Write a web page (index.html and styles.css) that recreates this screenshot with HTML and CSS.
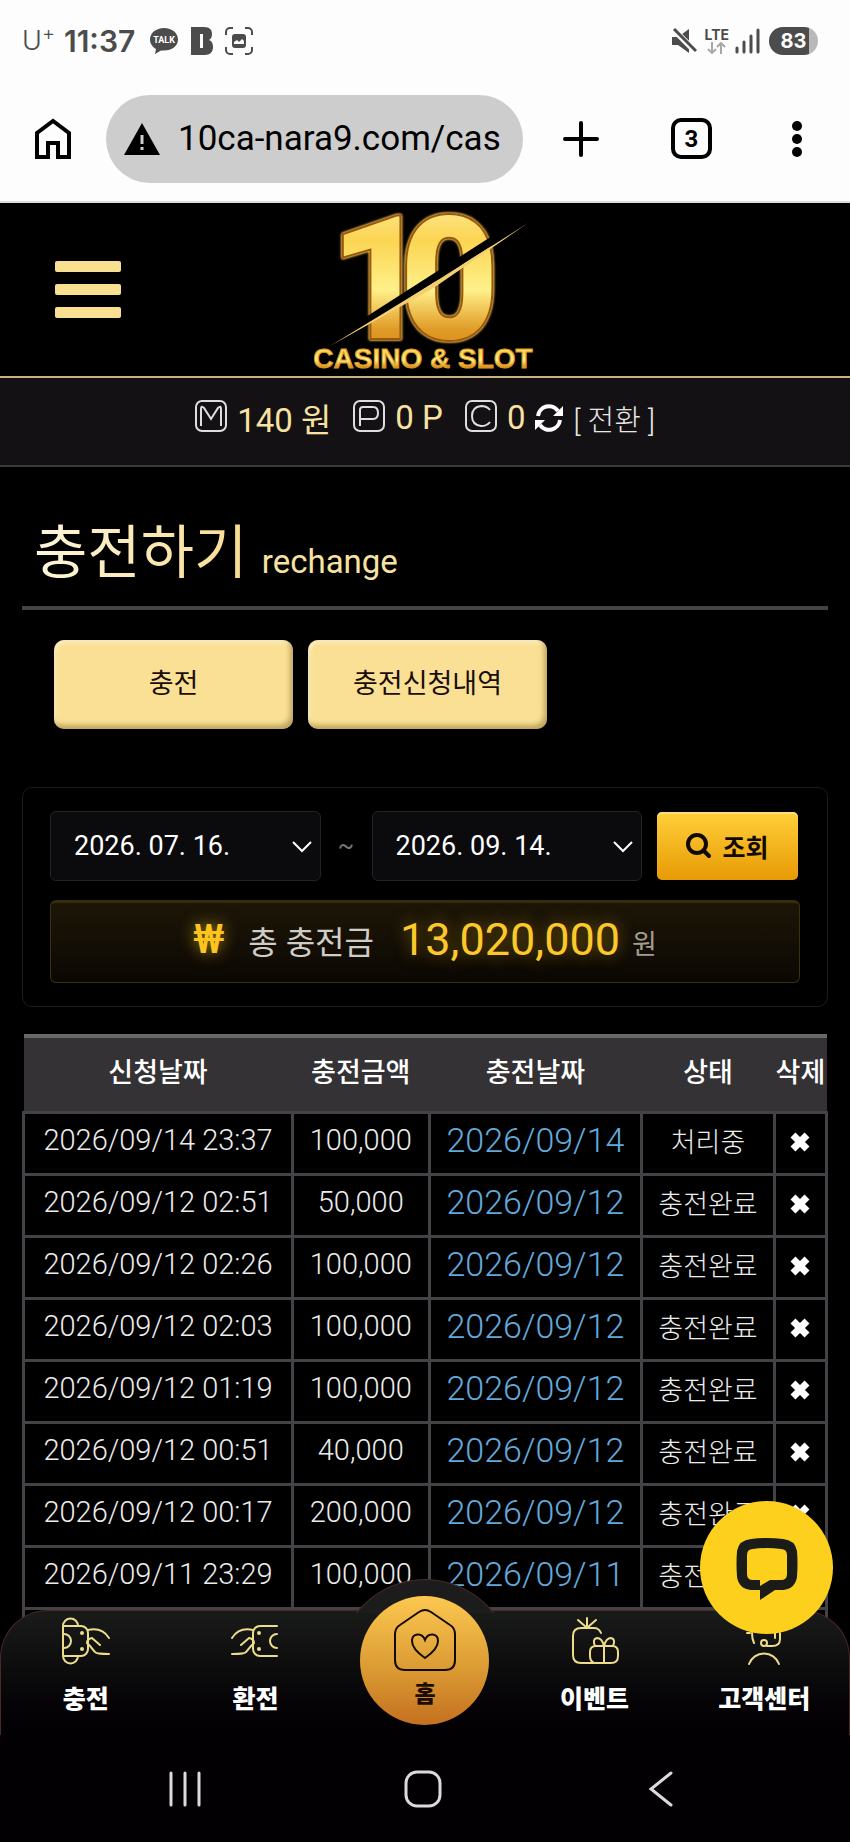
FILE: index.html
```
<!DOCTYPE html>
<html lang="ko">
<head>
    <meta charset="UTF-8">
    <meta name="viewport" content="width=device-width, initial-scale=1.0">
    <title>충전하기</title>
    <link rel="stylesheet" href="styles.css">
</head>
<body>
<div class="screen">

    <!-- status bar -->
    <div class="status-bar">
        <span class="carrier">U<sup>+</sup></span>
        <span class="clock">11:37</span>
        <svg class="st-icon" width="30" height="28" viewBox="0 0 30 28">
            <path d="M15 1C7 1 1 6 1 12.500c0 4 2.500 7.500 6 9.500l-1 5 6-3.500h3c8 0 14-4.500 14-11S23 1 15 1z" fill="#4c4c4c"/>
            <text x="15" y="16" text-anchor="middle" class="talk">TALK</text>
        </svg>
        <svg class="st-icon" width="22" height="28" viewBox="0 0 22 28">
            <path fill="#4c4c4c" fill-rule="evenodd" d="M0 0h13c6 0 8 3 8 7 0 3-1 5-3 6 3 1 4 4 4 7 0 5-3 8-8 8H0zM9 7v14h3V7z"/>
        </svg>
        <svg class="st-icon" width="28" height="28" viewBox="0 0 28 28" fill="none" stroke="#4c4c4c" stroke-width="2">
            <path d="M1 8V5a4 4 0 0 1 4-4h3M20 1h3a4 4 0 0 1 4 4v3M27 20v3a4 4 0 0 1-4 4h-3M8 27H5a4 4 0 0 1-4-4v-3"/>
            <rect x="8" y="8" width="12" height="12" rx="2" fill="#4c4c4c"/>
            <path d="M9 17v-2l3-2 2 2 3-3 2 2v3z" fill="#fdfdfd" stroke="none"/>
        </svg>
        <span class="spacer"></span>
        <svg width="26" height="26" viewBox="0 0 26 26">
            <path d="M1 9h6L18 1v24l-11-8H1z" fill="#4c4c4c"/>
            <path d="M1 0l25 25" stroke="#fdfdfd" stroke-width="6"/>
            <path d="M3 1l22 22" stroke="#4c4c4c" stroke-width="3"/>
        </svg>
        <span class="lte">LTE
            <svg width="20" height="12" viewBox="0 0 20 12" fill="none" stroke="#a8a8a8" stroke-width="2"><path d="M5 0v11M1 7l4 4 4-4M14 12V1M10 5l4-4 4 4"/></svg>
        </span>
        <svg class="signal" width="26" height="26" viewBox="0 0 26 26" stroke="#4c4c4c" stroke-width="3" stroke-linecap="round"><path d="M3 24v-4M10 24V14M17 24V8M24 24V2"/></svg>
        <span class="battery">83</span>
    </div>

    <!-- browser toolbar -->
    <div class="toolbar">
        <button class="tool home-btn" aria-label="홈">
            <svg width="38" height="42" viewBox="0 0 38 42" fill="none" stroke="#000" stroke-width="4"><path d="M3 39V15L19 3l16 12v24H24V25H14v14z"/></svg>
        </button>
        <div class="url-box">
            <svg width="36" height="32" viewBox="0 0 36 32"><path d="M18 0l18 32H0z"/><path d="M18 12v9M18 24v3" stroke="#cdcdcd" stroke-width="3"/></svg>
            <input type="text" class="url" aria-label="주소" value="10ca-nara9.com/cas">
        </div>
        <button class="tool" aria-label="새 탭">
            <svg width="36" height="36" viewBox="0 0 36 36" stroke="#000" stroke-width="4" stroke-linecap="round"><path d="M18 2v32M2 18h32"/></svg>
        </button>
        <button class="tool tabs">3</button>
        <button class="tool more" aria-label="메뉴">
            <svg width="10" height="36" viewBox="0 0 10 36"><circle cx="5" cy="5" r="5"/><circle cx="5" cy="18" r="5"/><circle cx="5" cy="31" r="5"/></svg>
        </button>
    </div>

    <div class="page">
        <header class="header">
            <button class="menu-btn" aria-label="메뉴 열기"><span></span><span></span><span></span></button>
            <svg class="logo" width="230" height="166" viewBox="0 0 230 166" role="img" aria-label="10 CASINO &amp; SLOT">
                <defs>
                    <linearGradient id="gold" x1="0" y1="0" x2="0" y2="1">
                        <stop offset="0" stop-color="#fff3b8"/>
                        <stop offset=".3" stop-color="#fbd552"/>
                        <stop offset=".55" stop-color="#fff08a"/>
                        <stop offset=".75" stop-color="#e09a25"/>
                        <stop offset="1" stop-color="#c97a12"/>
                    </linearGradient>
                </defs>
                <g class="logo-num">
                    <text x="20" y="131">1</text>
                    <text x="90" y="131">0</text>
                </g>
                <path d="M20 133L218 6v10L20 141z" fill="#000"/>
                <path d="M20 139L120 78 218 16 122 82z" fill="#f3cf72"/>
                <text x="113" y="161" text-anchor="middle" class="logo-sub">CASINO &amp; SLOT</text>
            </svg>
        </header>

        <div class="wallet">
            <svg class="badge" viewBox="0 0 32 32"><rect x="1" y="1" width="30" height="30" rx="6"/><path d="M6 26V9q0-4 3-1l7 11 7-11q3-3 3 1v17"/></svg>
            <span class="amount">140 원</span>
            <svg class="badge second" viewBox="0 0 32 32"><rect x="1" y="1" width="30" height="30" rx="6"/><path d="M7 26V10q0-3 3-3h10q5 0 5 6t-5 6H7"/></svg>
            <span class="amount">0 P</span>
            <svg class="badge third" viewBox="0 0 32 32"><rect x="1" y="1" width="30" height="30" rx="6"/><path d="M25 10q-3-4-9-4-9 1-9 10t9 10q6 0 9-4"/></svg>
            <span class="amount">0</span>
            <button class="exchange">
                <svg width="28" height="28" viewBox="0 0 28 28" fill="none" stroke="#fff" stroke-width="4"><path d="M3 12A11 11 0 0 1 23 7M25 16A11 11 0 0 1 5 21"/><path d="M28 2v10H18zM0 26V16h10z" fill="#fff" stroke="none"/></svg>
                [ 전환 ]
            </button>
        </div>

        <main class="content">
            <h2 class="title"><span>충전하기</span> <small>rechange</small></h2>

            <div class="tabs-row">
                <button class="gold-btn">충전</button>
                <button class="gold-btn">충전신청내역</button>
            </div>

            <section class="panel">
                <div class="search">
                    <div class="date">
                        <select aria-label="시작 날짜"><option>2026. 07. 16.</option></select>
                        <svg viewBox="0 0 20 12"><path d="M1 1l9 9 9-9"/></svg>
                    </div>
                    <span class="tilde">~</span>
                    <div class="date">
                        <select aria-label="종료 날짜"><option>2026. 09. 14.</option></select>
                        <svg viewBox="0 0 20 12"><path d="M1 1l9 9 9-9"/></svg>
                    </div>
                    <button class="search-btn">
                        <svg width="26" height="26" viewBox="0 0 26 26" fill="none" stroke="#120a00" stroke-width="4" stroke-linecap="round"><circle cx="11" cy="11" r="9"/><path d="M18 18l5 5"/></svg>
                        조회
                    </button>
                </div>
                <div class="total">
                    <span class="won">₩</span>
                    <span class="total-label">총 충전금</span>
                    <span class="total-num">13,020,000</span>
                    <span class="unit">원</span>
                </div>
            </section>

            <table class="list">
                <colgroup><col class="c1"><col class="c2"><col class="c3"><col class="c4"><col class="c5"></colgroup>
                <thead>
                    <tr><th>신청날짜</th><th>충전금액</th><th>충전날짜</th><th>상태</th><th>삭제</th></tr>
                </thead>
                <tbody id="rows"></tbody>
            </table>
        </main>

        <button class="chat" aria-label="채팅 상담">
            <svg width="64" height="64" viewBox="0 0 64 64"><path fill="#1b1b18" fill-rule="evenodd" d="M16 3Q32 1 48 3Q60 4 62 15Q63 27 62 41Q60 53 48 54H40L25 64V54H16Q4 53 2 41Q1 27 2 15Q4 4 16 3zM18 13Q12 13 12 19V38Q12 44 18 44H25V50L35 44H46Q52 44 52 38V19Q52 13 46 13Q32 11 18 13z"/></svg>
        </button>

        <nav class="bottom-nav">
            <div class="bump"></div>
            <a href="#" class="item">
                <svg viewBox="0 0 48 48">
                    <path d="M1 9v30a7 7 0 0 0 15 0M1 9a7 7 0 0 1 15 0"/>
                    <g id="hand"><path d="M2 9h17a7 7 0 0 1 7 7v16a7 7 0 0 1-7 7H2M2 17a6 6 0 0 1 0 14M26 13q14-3 21 8M38 28l-8-7q-5 1-5 5l3 3 5 6q1 2 14 2"/><circle cx="20" cy="16" r="1"/><circle cx="20" cy="32" r="1"/></g>
                </svg>
                <span>충전</span>
            </a>
            <a href="#" class="item">
                <svg viewBox="0 0 48 48"><g transform="matrix(-1 0 0 1 48 0)"><use href="#hand"/></g></svg>
                <span>환전</span>
            </a>
            <a href="#" class="item home">
                <svg viewBox="0 0 64 64"><path d="M26 4q6-4 12 0l19 13q5 3 5 9v26q0 10-10 10H12Q2 62 2 52V26q0-6 5-9zM32 50q-13-9-13-17c0-8 10-9 13-1 3-8 13-7 13 1q0 8-13 17z"/></svg>
                <span>홈</span>
            </a>
            <a href="#" class="item">
                <svg viewBox="0 0 48 48"><path d="M30 16q-2-5-7-5H10q-8 0-8 8v19q0 8 8 8h30q7 0 7-7v-4q0-6-6-6H25q-6 0-6 6v4q0 5 4 7M33 29v17M16 1v10M7 3l8 7M25 3l-8 7M24 29q-3-7 2-8 5 0 7 8 2-8 7-8 5 1 2 8"/></svg>
                <span>이벤트</span>
            </a>
            <a href="#" class="item">
                <svg viewBox="0 0 48 48"><path d="M9 47a16 16 0 0 1 30 0M14 26q-2-4-2-10M7 16h3M35 16v5M40 16v6q0 7-8 7h-5"/><circle cx="24" cy="26" r="3"/></svg>
                <span>고객센터</span>
            </a>
        </nav>
    </div>

    <!-- system navigation -->
    <div class="system-nav">
        <button aria-label="최근 앱"><svg width="36" height="36" viewBox="0 0 36 36"><path d="M4 2v32M18 2v32M32 2v32"/></svg></button>
        <button aria-label="홈 화면"><svg width="38" height="38" viewBox="0 0 38 38"><rect x="2" y="2" width="34" height="34" rx="11"/></svg></button>
        <button aria-label="뒤로"><svg width="36" height="38" viewBox="0 0 36 38"><path d="M28 3L8 19l20 16"/></svg></button>
    </div>
</div>

<script>
    const rows = [
        ["2026/09/14 23:37", "100,000", "2026/09/14", "처리중"],
        ["2026/09/12 02:51", "50,000", "2026/09/12", "충전완료"],
        ["2026/09/12 02:26", "100,000", "2026/09/12", "충전완료"],
        ["2026/09/12 02:03", "100,000", "2026/09/12", "충전완료"],
        ["2026/09/12 01:19", "100,000", "2026/09/12", "충전완료"],
        ["2026/09/12 00:51", "40,000", "2026/09/12", "충전완료"],
        ["2026/09/12 00:17", "200,000", "2026/09/12", "충전완료"],
        ["2026/09/11 23:29", "100,000", "2026/09/11", "충전완료"]
    ];
    const del = '<button class="del" aria-label="삭제"><svg width="20" height="20" viewBox="0 0 20 20"><path d="M3 3l14 14M17 3L3 17"/></svg></button>';
    document.getElementById("rows").innerHTML = rows.map(r =>
        `<tr><td>${r[0]}</td><td>${r[1]}</td><td class="done">${r[2]}</td><td class="state">${r[3]}</td><td>${del}</td></tr>`
    ).join("") + "<tr><td></td><td></td><td></td><td></td><td></td></tr>";
</script>
</body>
</html>
```

FILE: styles.css
```
* {
    box-sizing: border-box;
}
body {
    margin: 0;
    background: #000;
    color: #fff;
    font-family: Roboto, "Noto Sans CJK KR", sans-serif;
}
button {
    padding: 0;
    border: none;
    background: none;
    color: inherit;
    font-family: inherit;
    cursor: pointer;
}
svg {
    display: block;
    flex: none;
}
.screen {
    display: flex;
    flex-direction: column;
    height: 100vh;
    overflow: hidden;
}

/* status bar */
.status-bar {
    display: flex;
    align-items: center;
    height: 82px;
    padding: 0 32px 0 22px;
    background: #fdfdfd;
    color: #4c4c4c;
    font-family: Inter, sans-serif;
}
.carrier {
    width: 42px;
    font-size: 27px;
    font-weight: 300;
    line-height: 30px;
}
.carrier sup {
    font-size: 20px;
    line-height: 10px;
}
.clock {
    margin-right: 14px;
    font-size: 30px;
    font-weight: 600;
}
.st-icon {
    margin-right: 12px;
}
.talk {
    font: 700 9px Roboto, sans-serif;
    fill: #fff;
}
.spacer {
    flex: 1;
}
.lte {
    display: flex;
    flex-direction: column;
    align-items: center;
    margin: 0 5px 0 8px;
    font-size: 14px;
    font-weight: 700;
    line-height: 14px;
}
.battery {
    width: 49px;
    height: 28px;
    margin-left: 9px;
    border-radius: 14px;
    background: linear-gradient(90deg, #4c4c4c 82%, #b9b9b9 82%);
    color: #fff;
    font-size: 20px;
    font-weight: 700;
    line-height: 28px;
    text-align: center;
}

/* browser toolbar */
.toolbar {
    display: flex;
    align-items: center;
    height: 121px;
    padding: 12px 48px 18px 34px;
    border-bottom: 2px solid #dcdcdc;
    background: #fdfdfd;
    color: #000;
}
.url-box {
    display: flex;
    flex: 1;
    align-items: center;
    gap: 18px;
    height: 88px;
    margin: 0 40px 0 34px;
    padding: 0 14px 0 18px;
    border-radius: 44px;
    background: #cdcdcd;
}
.url {
    width: 100%;
    min-width: 0;
    padding: 0;
    border: none;
    background: none;
    font: 400 35px Roboto, sans-serif;
    outline: none;
}
.tabs {
    width: 41px;
    height: 41px;
    margin: 0 80px 0 72px;
    border: 4px solid #000;
    border-radius: 10px;
    font-size: 24px;
    font-weight: 700;
}

/* site header */
.page {
    position: relative;
    flex: 1;
    min-height: 0;
    overflow: hidden;
}
.header {
    display: grid;
    grid-template-columns: 1fr auto 1fr;
    align-items: center;
    height: 175px;
    padding: 0 55px;
    border-bottom: 2px solid #c9b184;
}
.menu-btn {
    display: flex;
    flex-direction: column;
    gap: 12px;
    width: 66px;
}
.menu-btn span {
    height: 11px;
    border-radius: 2px;
    background: #f8df92;
}
.logo {
    overflow: visible;
}
.logo-num {
    font: 900 170px Roboto, sans-serif;
    fill: url(#gold);
    stroke: #9a5808;
    stroke-width: 4px;
    paint-order: stroke;
    filter: drop-shadow(0 0 1px #ffe08a) drop-shadow(0 0 1px #d99a2e);
}
.logo-sub {
    font: 700 28px "Liberation Sans", sans-serif;
    fill: url(#gold);
    stroke: #d9951f;
    stroke-width: 1px;
}
.wallet {
    display: flex;
    align-items: center;
    justify-content: center;
    height: 89px;
    padding-bottom: 8px;
    border-bottom: 2px solid #3b393c;
    background: #141114;
    font-size: 33px;
}
.badge {
    width: 32px;
    height: 32px;
    margin: 0 10px 4px 0;
    fill: none;
    stroke: #dedede;
    stroke-width: 2;
}
.badge.second,
.badge.third {
    margin-left: 22px;
}
.amount {
    color: #f7e2a0;
}
.exchange {
    display: flex;
    align-items: center;
    gap: 10px;
    margin-left: 10px;
    color: #e6e6e6;
    font-size: 29px;
    font-weight: 300;
}

/* content */
.content {
    padding: 0 22px;
}
.title {
    margin: 0;
    padding: 44px 12px 2px;
    border-bottom: 4px solid #454346;
    font-size: 58px;
    font-weight: 400;
    line-height: 84px;
}
.title span {
    background: linear-gradient(90deg, #fdf6dc, #f9dc90);
    background-clip: text;
    -webkit-background-clip: text;
    color: transparent;
}
.title small {
    font-size: 33px;
    color: #f7e2a0;
}
.tabs-row {
    display: flex;
    gap: 15px;
    padding: 30px 32px 58px;
}
.gold-btn {
    width: 239px;
    height: 89px;
    padding-bottom: 6px;
    border-radius: 10px;
    background: #f9e094;
    box-shadow: inset -3px -4px 5px rgba(120, 90, 30, 0.45), inset 2px 3px 4px rgba(255, 245, 220, 0.6);
    color: #1a0c08;
    font-size: 27px;
}
.panel {
    padding: 23px 27px;
    border: 1px solid #1d1b1e;
    border-radius: 10px;
}
.search {
    display: flex;
    align-items: center;
    margin-bottom: 19px;
}
.date {
    position: relative;
    flex: 1;
}
.date select {
    width: 100%;
    height: 70px;
    padding: 0 23px;
    border: 1px solid #232225;
    border-radius: 6px;
    background: #0b0a0d;
    color: #fff;
    font-family: inherit;
    font-size: 27px;
    appearance: none;
}
.date svg {
    position: absolute;
    top: 30px;
    right: 9px;
    width: 20px;
    height: 12px;
    fill: none;
    stroke: #fff;
    stroke-width: 2;
    pointer-events: none;
}
.tilde {
    width: 51px;
    color: #777;
    font-size: 24px;
    text-align: center;
}
.search-btn {
    display: flex;
    align-items: center;
    justify-content: center;
    gap: 10px;
    width: 141px;
    height: 68px;
    margin: 0 2px 0 15px;
    border-radius: 5px;
    background: linear-gradient(#ffd03a, #e79a04);
    box-shadow: inset 0 2px 1px rgba(255, 240, 190, 0.5);
    color: #120a00;
    font-size: 25px;
    font-weight: 700;
}
.total {
    display: flex;
    align-items: center;
    justify-content: center;
    height: 83px;
    padding-bottom: 6px;
    border: 1px solid #3a3209;
    border-top: 3px solid #352c0b;
    border-radius: 6px;
    background: linear-gradient(#1d1607, #0b0703);
}
.won {
    margin-right: 24px;
    color: #fcc41f;
    font-size: 40px;
    font-weight: 500;
    text-shadow: 0 0 16px rgba(252, 196, 31, 0.6);
}
.total-label {
    margin-right: 26px;
    color: #d0ccc6;
    font-size: 32px;
}
.total-num {
    margin-right: 12px;
    color: #fcc82a;
    font-size: 45px;
    text-shadow: 0 0 16px rgba(252, 196, 31, 0.5);
}
.unit {
    padding-top: 6px;
    color: #a39d90;
    font-size: 27px;
}

/* history table */
.list {
    width: 100%;
    margin-top: 27px;
    border-collapse: collapse;
    table-layout: fixed;
}
.c1 { width: 33.5%; }
.c2 { width: 17%; }
.c3 { width: 26.5%; }
.c4 { width: 16.5%; }
.c5 { width: 6.5%; }
.list th {
    height: 76px;
    padding: 0 0 8px;
    border-top: 4px solid #6a686b;
    background: #343234;
    font-size: 27px;
    font-weight: 500;
    white-space: nowrap;
}
.list td {
    height: 62px;
    padding: 0 0 6px;
    border: 3px solid #444246;
    color: #ececec;
    font-size: 29px;
    font-weight: 300;
    text-align: center;
    white-space: nowrap;
}
.list .done {
    color: #62a9dc;
    font-size: 34px;
}
.list .state {
    font-size: 27px;
}
.del {
    display: block;
    margin: 4px auto 0;
}
.del path {
    stroke: #fff;
    stroke-width: 7;
}

/* chat button */
.chat {
    position: absolute;
    right: 17px;
    bottom: 101px;
    z-index: 3;
    display: flex;
    align-items: center;
    justify-content: center;
    width: 133px;
    height: 133px;
    border-radius: 50%;
    background: #fed01e;
}

/* bottom menu */
.bottom-nav {
    position: absolute;
    right: 0;
    bottom: 0;
    left: 0;
    z-index: 2;
    display: grid;
    grid-template-columns: repeat(5, 1fr);
    height: 125px;
    border: 1px solid #4c2828;
    border-bottom: none;
    border-radius: 48px 48px 0 0;
    background: linear-gradient(#191b19, #050306 75%, #020003);
}
.bump {
    position: absolute;
    top: -32px;
    left: 50%;
    width: 176px;
    height: 34px;
    margin-left: -88px;
    overflow: hidden;
}
.bump::before {
    content: "";
    display: block;
    height: 176px;
    border: 1px solid #4c2828;
    border-radius: 50%;
    background: #1b1c1b;
}
.item {
    display: flex;
    flex-direction: column;
    align-items: center;
    gap: 20px;
    padding-top: 6px;
    color: #fff;
    font-size: 25px;
    font-weight: 900;
    line-height: 30px;
    text-decoration: none;
}
.item svg {
    width: 48px;
    height: 48px;
    fill: none;
    stroke: #eddc8a;
    stroke-width: 2;
    stroke-linecap: round;
}
.item.home {
    position: relative;
    justify-self: center;
    width: 129px;
    height: 129px;
    margin-top: -15px;
    padding-top: 12px;
    gap: 8px;
    border-radius: 50%;
    background: linear-gradient(#fcc850, #dc9c34 55%, #c4701f);
    color: #1c0d02;
    font-size: 23px;
}
.item.home svg {
    width: 64px;
    height: 64px;
    stroke: #150a02;
}

/* system navigation */
.system-nav {
    display: grid;
    grid-template-columns: 150px 150px 150px;
    justify-content: center;
    gap: 88px;
    align-items: center;
    height: 107px;
    padding-right: 5px;
    background: #020003;
}
.system-nav svg {
    margin: auto;
    fill: none;
    stroke: #dcdadd;
    stroke-width: 3;
    stroke-linecap: round;
}
```
